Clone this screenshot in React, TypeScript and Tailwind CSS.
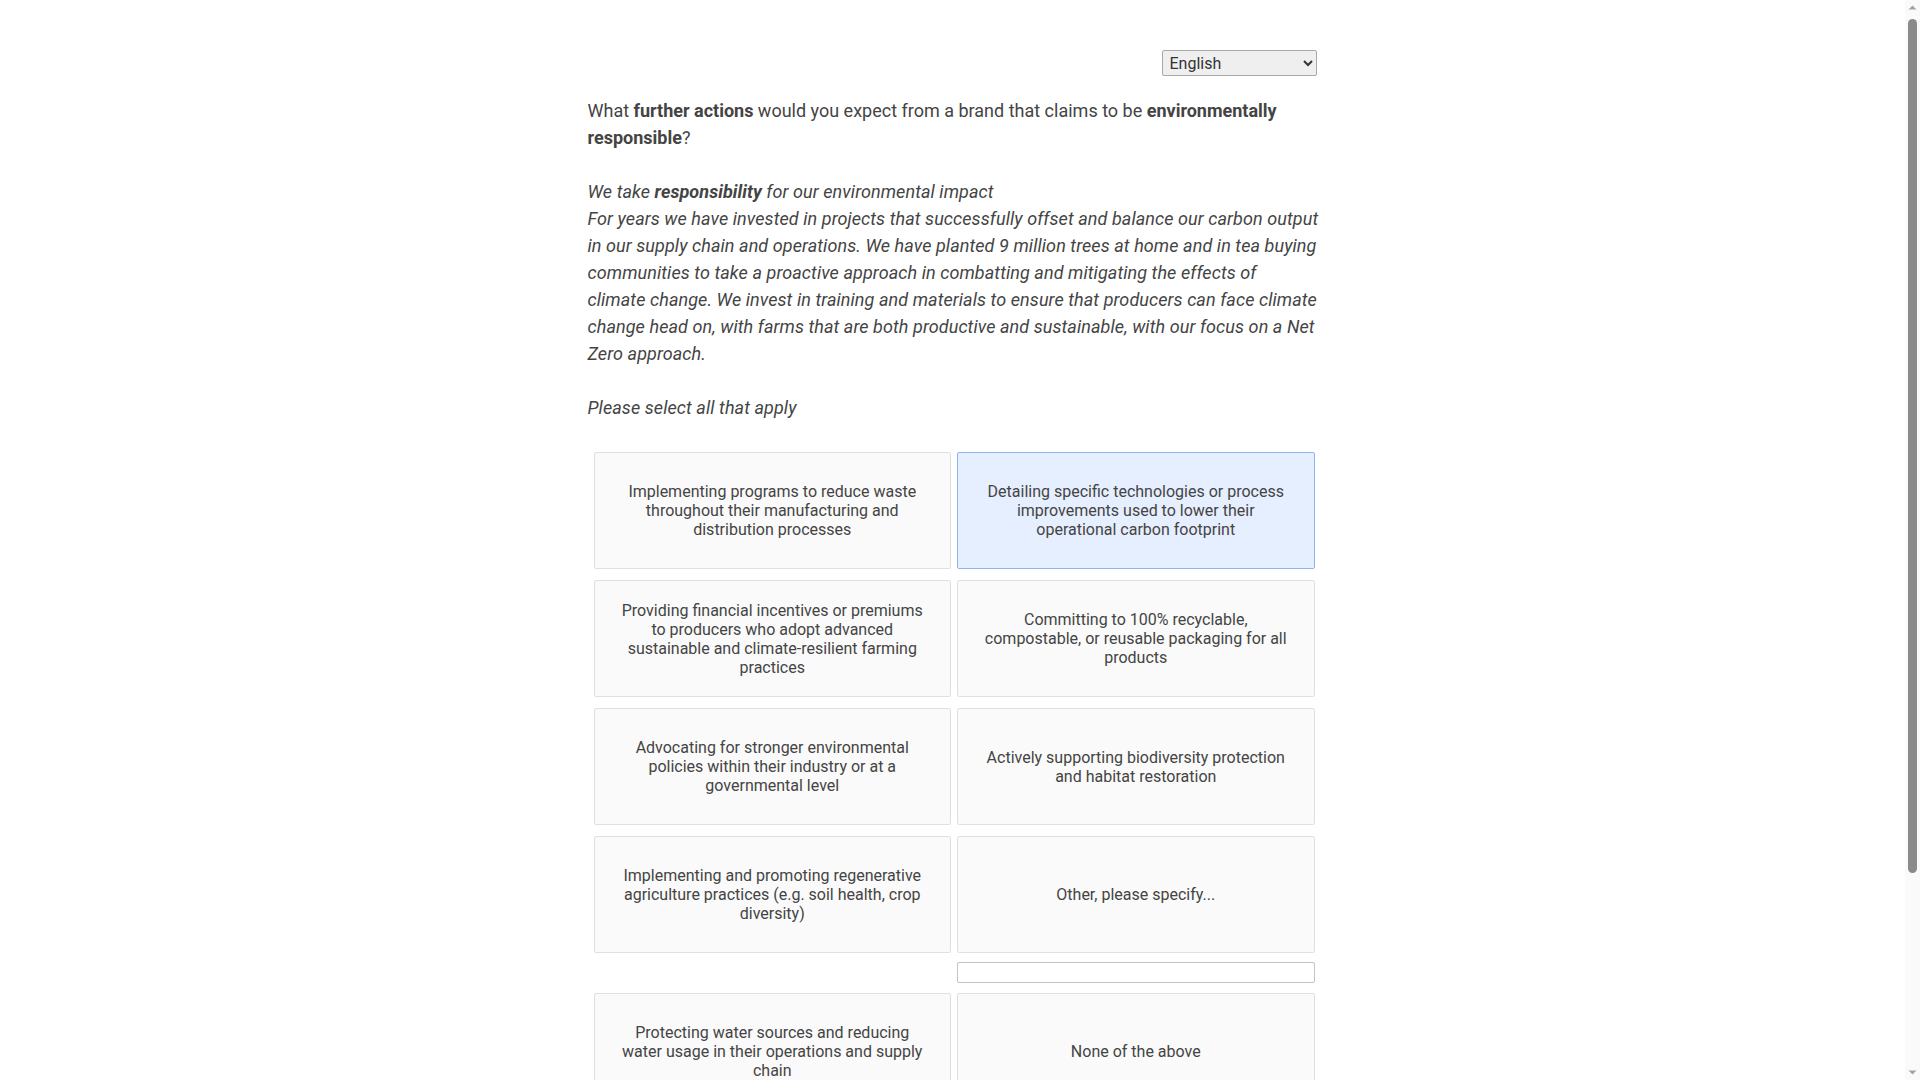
import { useState } from "react";

// Answer options for the multi-select question
const options = [
  "Implementing programs to reduce waste throughout their manufacturing and distribution processes",
  "Detailing specific technologies or process improvements used to lower their operational carbon footprint",
  "Providing financial incentives or premiums to producers who adopt advanced sustainable and climate-resilient farming practices",
  "Committing to 100% recyclable, compostable, or reusable packaging for all products",
  "Advocating for stronger environmental policies within their industry or at a governmental level",
  "Actively supporting biodiversity protection and habitat restoration",
  "Implementing and promoting regenerative agriculture practices (e.g. soil health, crop diversity)",
  "Other, please specify...",
  "Protecting water sources and reducing water usage in their operations and supply chain",
  "None of the above",
];

function OptionCard({
  label,
  selected,
  onClick,
}: {
  label: string;
  selected: boolean;
  onClick: () => void;
}) {
  return (
    <div
      onClick={onClick}
      className={
        "h-[117px] flex items-center justify-center text-center px-5 rounded-[2px] border cursor-pointer text-[16px] leading-[19px] text-[#444] " +
        (selected
          ? "bg-[#e6efff] border-[#8fb4f5]"
          : "bg-[#fafafa] border-[#e0e0e0]")
      }
    >
      {label}
    </div>
  );
}

// Classic browser scrollbar look, drawn beside the scroll area
function ScrollRail() {
  return (
    <div className="w-[15px] h-full bg-[#fafafa] flex flex-col items-center">
      <svg width="15" height="15" viewBox="0 0 15 15">
        <path d="M3.5 9.5 L7.5 5.5 L11.5 9.5 Z" fill="#a3a3a3" />
      </svg>
      <div className="w-[9px] h-[854px] mt-[4px] rounded-full bg-[#8a8a8a]" />
      <div className="flex-1" />
      <svg width="15" height="15" viewBox="0 0 15 15">
        <path d="M3.5 5.5 L7.5 9.5 L11.5 5.5 Z" fill="#a3a3a3" />
      </svg>
    </div>
  );
}

export default function App() {
  const [selected, setSelected] = useState<number[]>([1]);

  const toggle = (i: number) =>
    setSelected((s) => (s.includes(i) ? s.filter((x) => x !== i) : [...s, i]));

  const rows: number[][] = [];
  for (let i = 0; i < options.length; i += 2) rows.push([i, i + 1]);

  return (
    <div className="h-screen flex bg-white font-['Roboto',sans-serif] text-[#444]">
      <div className="flex-1 h-full overflow-y-auto [scrollbar-width:none]">
        <div className="w-[730px] mx-auto pt-[50px] pb-[219px]">
          {/* Language picker */}
          <div className="flex justify-end pr-px">
            <select className="w-[155px] h-[26px] bg-[#efefef] border border-[#a9a9a9] rounded-[2px] px-[3px] text-[16px] text-[#333]">
              <option>English</option>
            </select>
          </div>

          {/* Question */}
          <div className="mt-[21px] text-[18px] leading-[27px]">
            <p>
              What <strong>further actions</strong> would you expect from a
              brand that claims to be <strong>environmentally responsible</strong>?
            </p>
            <br />
            <p className="italic whitespace-nowrap tracking-[0.08px]">
              We take <strong>responsibility</strong> for our environmental
              impact
              <br />
              For years we have invested in projects that successfully offset
              and balance our carbon output
              <br />
              in our supply chain and operations. We have planted 9 million
              trees at home and in tea buying
              <br />
              communities to take a proactive approach in combatting and
              mitigating the effects of
              <br />
              climate change. We invest in training and materials to ensure that
              producers can face climate
              <br />
              change head on, with farms that are both productive and
              sustainable, with our focus on a Net
              <br />
              Zero approach.
            </p>
            <br />
            <p className="italic tracking-[0.08px]">Please select all that apply</p>
          </div>

          {/* Options grid */}
          <div className="mt-[31px] pl-[6px] pr-[3px] flex flex-col">
            {rows.map((pair, r) => (
              <div key={r}>
                <div className={"grid grid-cols-2 gap-[6px] " + (r > 0 ? "mt-[11px]" : "")}>
                  {pair.map((i) => (
                    <OptionCard
                      key={i}
                      label={options[i]}
                      selected={selected.includes(i)}
                      onClick={() => toggle(i)}
                    />
                  ))}
                </div>
                {pair.includes(7) && (
                  <div className="grid grid-cols-2 gap-[6px] mt-[9px] -mb-px">
                    <div />
                    <input
                      type="text"
                      className="h-[21px] bg-white border border-[#c4c4c4] rounded-[2px] px-1 text-[14px]"
                    />
                  </div>
                )}
              </div>
            ))}
          </div>
        </div>
      </div>
      <ScrollRail />
    </div>
  );
}
